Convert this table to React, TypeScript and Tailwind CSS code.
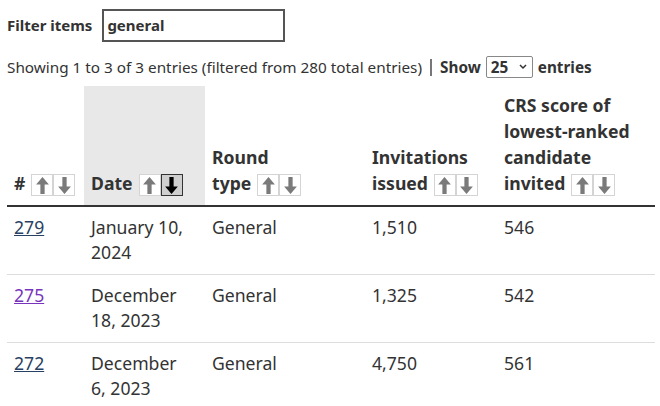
import React from 'react';

const Arrow = ({ dir, active }: { dir: 'up' | 'down'; active?: boolean }) => (
  <span
    className={`inline-flex h-[22px] w-[22px] items-center justify-center border align-middle ${
      active ? 'border-[#333] bg-[#cfcfcf]' : 'border-[#d4d4d4] bg-white'
    }`}
  >
    <svg
      width="13"
      height="17"
      viewBox="0 0 12 16"
      className={dir === 'down' ? 'rotate-180' : ''}
      fill={active ? '#000' : '#7a7a7a'}
    >
      <path d="M6 0 L12 7 H8 V16 H4 V7 H0 Z" />
    </svg>
  </span>
);

// last word of a heading stays on the same line as its sort buttons
const Heading = ({ text, active }: { text: string; active?: 'up' | 'down' }) => {
  const words = text.split(' ');
  const last = words.pop();
  return (
    <>
      {words.length > 0 && words.join(' ') + ' '}
      <span className="whitespace-nowrap">
        {last}
        <span className="ml-[6px] inline-flex align-middle">
          <Arrow dir="up" active={active === 'up'} />
          <Arrow dir="down" active={active === 'down'} />
        </span>
      </span>
    </>
  );
};

const rows = [
  { id: '279', date: 'January 10, 2024', type: 'General', inv: '1,510', crs: '546', visited: false },
  { id: '275', date: 'December 18, 2023', type: 'General', inv: '1,325', crs: '542', visited: true },
  { id: '272', date: 'December 6, 2023', type: 'General', inv: '4,750', crs: '561', visited: false },
];

export default function App() {
  return (
    <div
      className="h-[406px] w-[660px] overflow-hidden bg-white px-[7px] text-[#333]"
      style={{ fontFamily: '"Noto Sans", sans-serif' }}
    >
      <div className="flex items-center pt-[9px]">
        <label className="text-[15px] font-bold">Filter items</label>
        <div className="ml-[10px] flex h-[33px] w-[183px] items-center border-2 border-[#555] px-[3px] text-[15px] font-bold">
          general
        </div>
      </div>

      <div className="mt-[14px] flex h-[22px] items-center text-[15.3px]">
        <span>Showing 1 to 3 of 3 entries (filtered from 280 total entries)</span>
        <span className="mx-[8px] h-[17px] w-[2px] bg-[#777]" />
        <span className="font-bold">Show</span>
        <span className="ml-[5px] flex h-[22px] w-[47px] items-center justify-between rounded-[2px] border border-[#888] pl-[4px] pr-[5px] font-bold">
          25
          <svg width="8" height="6" viewBox="0 0 8 6">
            <path d="M1 1 L4 4 L7 1" stroke="#333" strokeWidth="1.5" fill="none" />
          </svg>
        </span>
        <span className="ml-[5px] font-bold">entries</span>
      </div>

      <table className="mt-[8px] w-[648px] table-fixed border-collapse text-[17.6px]">
        <colgroup>
          <col className="w-[77px]" />
          <col className="w-[121px]" />
          <col className="w-[160px]" />
          <col className="w-[132px]" />
          <col className="w-[158px]" />
        </colgroup>
        <thead>
          <tr className="border-b-2 border-[#333] text-left align-bottom font-bold leading-[26px]">
            <th className="pb-[9px] pl-[7px] pr-[12px] pt-[6px]">
              <Heading text="#" />
            </th>
            <th className="bg-[#e8e8e8] pb-[9px] pl-[7px] pr-[12px] pt-[6px]">
              <Heading text="Date" active="down" />
            </th>
            <th className="pb-[9px] pl-[7px] pr-[12px] pt-[6px]">
              <Heading text="Round type" />
            </th>
            <th className="pb-[9px] pl-[7px] pr-[12px] pt-[6px]">
              <Heading text="Invitations issued" />
            </th>
            <th className="pb-[9px] pl-[7px] pr-[12px] pt-[6px]">
              <Heading text="CRS score of lowest-ranked candidate invited" />
            </th>
          </tr>
        </thead>
        <tbody className="leading-[25px]">
          {rows.map((r) => (
            <tr key={r.id} className="border-b border-[#ddd] align-top">
              <td className="pb-[9px] pl-[7px] pr-[12px] pt-[8px]">
                <a
                  href="#"
                  className={`underline ${r.visited ? 'text-[#7834bc]' : 'text-[#284162]'}`}
                >
                  {r.id}
                </a>
              </td>
              <td className="pb-[9px] pl-[7px] pr-[12px] pt-[8px]">{r.date}</td>
              <td className="pb-[9px] pl-[7px] pr-[12px] pt-[8px]">{r.type}</td>
              <td className="pb-[9px] pl-[7px] pr-[12px] pt-[8px]">{r.inv}</td>
              <td className="pb-[9px] pl-[7px] pr-[12px] pt-[8px]">{r.crs}</td>
            </tr>
          ))}
        </tbody>
      </table>
    </div>
  );
}
